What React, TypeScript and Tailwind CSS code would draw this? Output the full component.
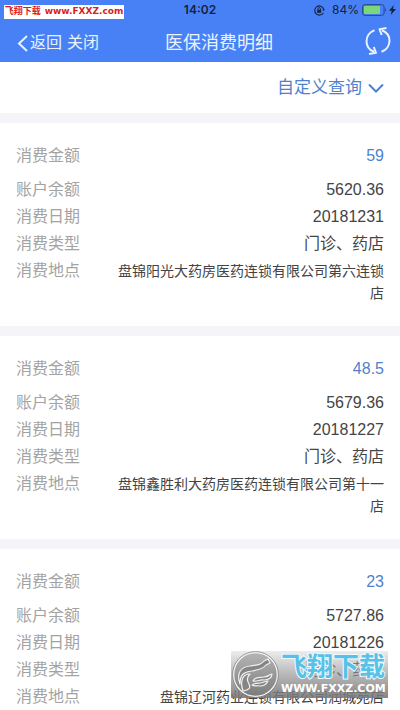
type Expense = {
  amount: string;
  balance: string;
  date: string;
  type: string;
  place: string;
};

const expenses: Expense[] = [
  {
    amount: "59",
    balance: "5620.36",
    date: "20181231",
    type: "门诊、药店",
    place: "盘锦阳光大药房医药连锁有限公司第六连锁店",
  },
  {
    amount: "48.5",
    balance: "5679.36",
    date: "20181227",
    type: "门诊、药店",
    place: "盘锦鑫胜利大药房医药连锁有限公司第十一店",
  },
  {
    amount: "23",
    balance: "5727.86",
    date: "20181226",
    type: "门诊、药店",
    place: "盘锦辽河药业连锁有限公司润城苑店",
  },
];

const StatusBar = () => (
  <div className="grid h-5 grid-cols-[1fr_auto_1fr] items-center px-1 text-[#14213f]">
    <div className="mt-1 flex h-[14px] w-[120px] items-center justify-center gap-1 whitespace-nowrap bg-white text-[9px] font-bold text-[#d81e1e]">
      <span>飞翔下载</span>
      <span className="font-['DejaVu_Sans','Noto_Sans_CJK_SC',sans-serif]">www.FXXZ.com</span>
    </div>
    <span className="font-['Inter',sans-serif] text-[12px] font-semibold">14:02</span>
    <div className="flex items-center justify-end">
      <svg className="mr-[7px] size-[11px]" viewBox="0 0 11 11" fill="none" stroke="currentColor">
        <path d="M9.7 4A4.6 4.6 0 1 0 9.4 7.7" strokeWidth="1.1" />
        <path d="M8.2 4.2h2.6L9.8 6.3z" fill="currentColor" stroke="none" />
        <rect x="3.2" y="4.8" width="4" height="3" fill="currentColor" stroke="none" />
        <path d="M4 5V3.8a1.2 1.2 0 0 1 2.4 0V5" strokeWidth="0.9" />
      </svg>
      <span className="mr-[3px] font-['Inter',sans-serif] text-[12px]">84%</span>
      <svg className="h-3 w-[25px]" viewBox="0 0 25 12" fill="none">
        <rect x="0.6" y="0.6" width="21.5" height="10.8" rx="2.4" stroke="#29478c" strokeWidth="1" />
        <rect x="2" y="2" width="16" height="8" rx="1" fill="#7bd67c" />
        <path d="M23.3 4v4c1.2-.5 1.2-3.5 0-4z" fill="#29478c" />
      </svg>
      <svg className="ml-[2px] h-[10px] w-[7px]" viewBox="0 0 7 10" fill="currentColor">
        <path d="M4.8 0 0 5.7h2.7L1.8 10 7 4H4z" />
      </svg>
    </div>
  </div>
);

const NavBar = () => (
  <nav className="grid h-[42px] grid-cols-[1fr_auto_119px] items-center pl-[17px] pr-2 pt-1 text-[#e9f3ff]">
    <div className="flex items-center gap-[5px] text-[16px]">
      <button type="button" className="flex items-center gap-[2px]">
        <svg className="h-[17px] w-[11px]" viewBox="0 0 11 17" fill="none" stroke="currentColor" strokeWidth="2">
          <path d="M10 1 2 8.5 10 16" />
        </svg>
        返回
      </button>
      <button type="button">关闭</button>
    </div>
    <h1 className="text-[18px] font-normal">医保消费明细</h1>
    <button type="button" aria-label="刷新" className="justify-self-end pb-1">
      <svg className="h-[30px] w-7" viewBox="0 0 28 30" fill="none" stroke="currentColor" strokeWidth="2">
        <path d="M10.5 4.2C5.500 6 2.500 10.500 2.500 15.200c0 5 3 8.800 7.500 10.600" />
        <path d="M5 28 12 26.800 9.800 21" strokeLinejoin="round" />
        <path d="M17.500 25.800c5-1.800 8-6.300 8-11 0-5-3-8.800-7.500-10.600" />
        <path d="M22.500 2 15.500 3.200 17.700 9" strokeLinejoin="round" />
      </svg>
    </button>
  </nav>
);

const Row = ({ label, value }: { label: string; value: string }) => (
  <div className="flex justify-between leading-[27px]">
    <dt className="text-[#a3a3a3]">{label}</dt>
    <dd>{value}</dd>
  </div>
);

const ExpenseCard = ({ expense }: { expense: Expense }) => (
  <dl className="border-t-[10px] border-[#f5f5f9] bg-white px-4 pb-[22px] pt-4 text-[16px] text-[#444]">
    <div className="mb-[3px] flex justify-between leading-[34px]">
      <dt className="text-[#a3a3a3]">消费金额</dt>
      <dd className="text-[#4f82cd]">{expense.amount}</dd>
    </div>
    <Row label="账户余额" value={expense.balance} />
    <Row label="消费日期" value={expense.date} />
    <Row label="消费类型" value={expense.type} />
    <div className="flex gap-8">
      <dt className="shrink-0 leading-[27px] text-[#a3a3a3]">消费地点</dt>
      <dd className="flex-1 pt-[3px] text-right text-[14px] leading-[22px]">{expense.place}</dd>
    </div>
  </dl>
);

const Watermark = () => (
  <div className="absolute bottom-3 right-3 flex h-[47px] w-[157px] items-center gap-[2px] bg-linear-to-b from-[#d0d0d0]/40 to-[#777777]/90 pl-px">
    <svg className="size-[47px] shrink-0" viewBox="0 0 47 47">
      <defs>
        <linearGradient id="seal" x1="0" y1="0" x2="0" y2="1">
          <stop offset="0" stopColor="#b5b5b5" />
          <stop offset="1" stopColor="#7c7c7c" />
        </linearGradient>
      </defs>
      <circle cx="23.5" cy="23.5" r="22" fill="url(#seal)" stroke="#f4f4f4" strokeWidth="1.6" />
      <circle cx="23.5" cy="23.5" r="22.9" fill="none" stroke="#777" strokeWidth="0.7" />
      <g fill="#858585" stroke="#f0f0f0" strokeWidth="1.2" strokeLinejoin="round">
        <path d="M8 33C4 22 9 16 18 15c7-1 11-1 14-5l4-2 2 4-4 2c-3 4-8 5-14 6-9 1-12 4-12 13z" />
        <path d="M11 40C8 31 10 23 18 23c-4 4-3 7-1 10 2 4 0 6-6 7z" />
        <path d="M21 30c2-5 7-3 11-4 4 0 6-3 8-3 0 4-4 6-8 6-4-1-7 2-11 1z" />
        <path d="M20 34c4-3 8-1 12-3l4-1c-2 4-5 5-8 5-3-1-5 1-8-1z" />
      </g>
    </svg>
    <div className="flex flex-col whitespace-nowrap font-bold">
      <span className="text-[26px] leading-[29px] text-[#58c1e8] [paint-order:stroke_fill] [-webkit-text-stroke:2px_#eefaff]">
        飞翔下载
      </span>
      <span className="font-['DejaVu_Sans',sans-serif] text-[11px] leading-[14px] text-white">WWW.FXXZ.COM</span>
    </div>
  </div>
);

export default function App() {
  return (
    <div className="relative flex h-screen flex-col overflow-hidden bg-white font-['Liberation_Sans','Noto_Sans_CJK_SC',sans-serif]">
      <header className="shrink-0 bg-[#4881f5]">
        <StatusBar />
        <NavBar />
      </header>
      <main className="min-h-0 flex-1 overflow-y-auto [scrollbar-width:none]">
        <div className="flex h-[51px] items-center justify-end px-4">
          <button type="button" className="flex items-center gap-[6px] text-[17px] text-[#4f82cd]">
            自定义查询
            <svg className="h-[10px] w-4" viewBox="0 0 16 10" fill="none" stroke="currentColor" strokeWidth="2">
              <path d="M1 1.5 8 8.5 15 1.5" />
            </svg>
          </button>
        </div>
        {expenses.map((expense) => (
          <ExpenseCard key={expense.date} expense={expense} />
        ))}
      </main>
      <Watermark />
    </div>
  );
}
